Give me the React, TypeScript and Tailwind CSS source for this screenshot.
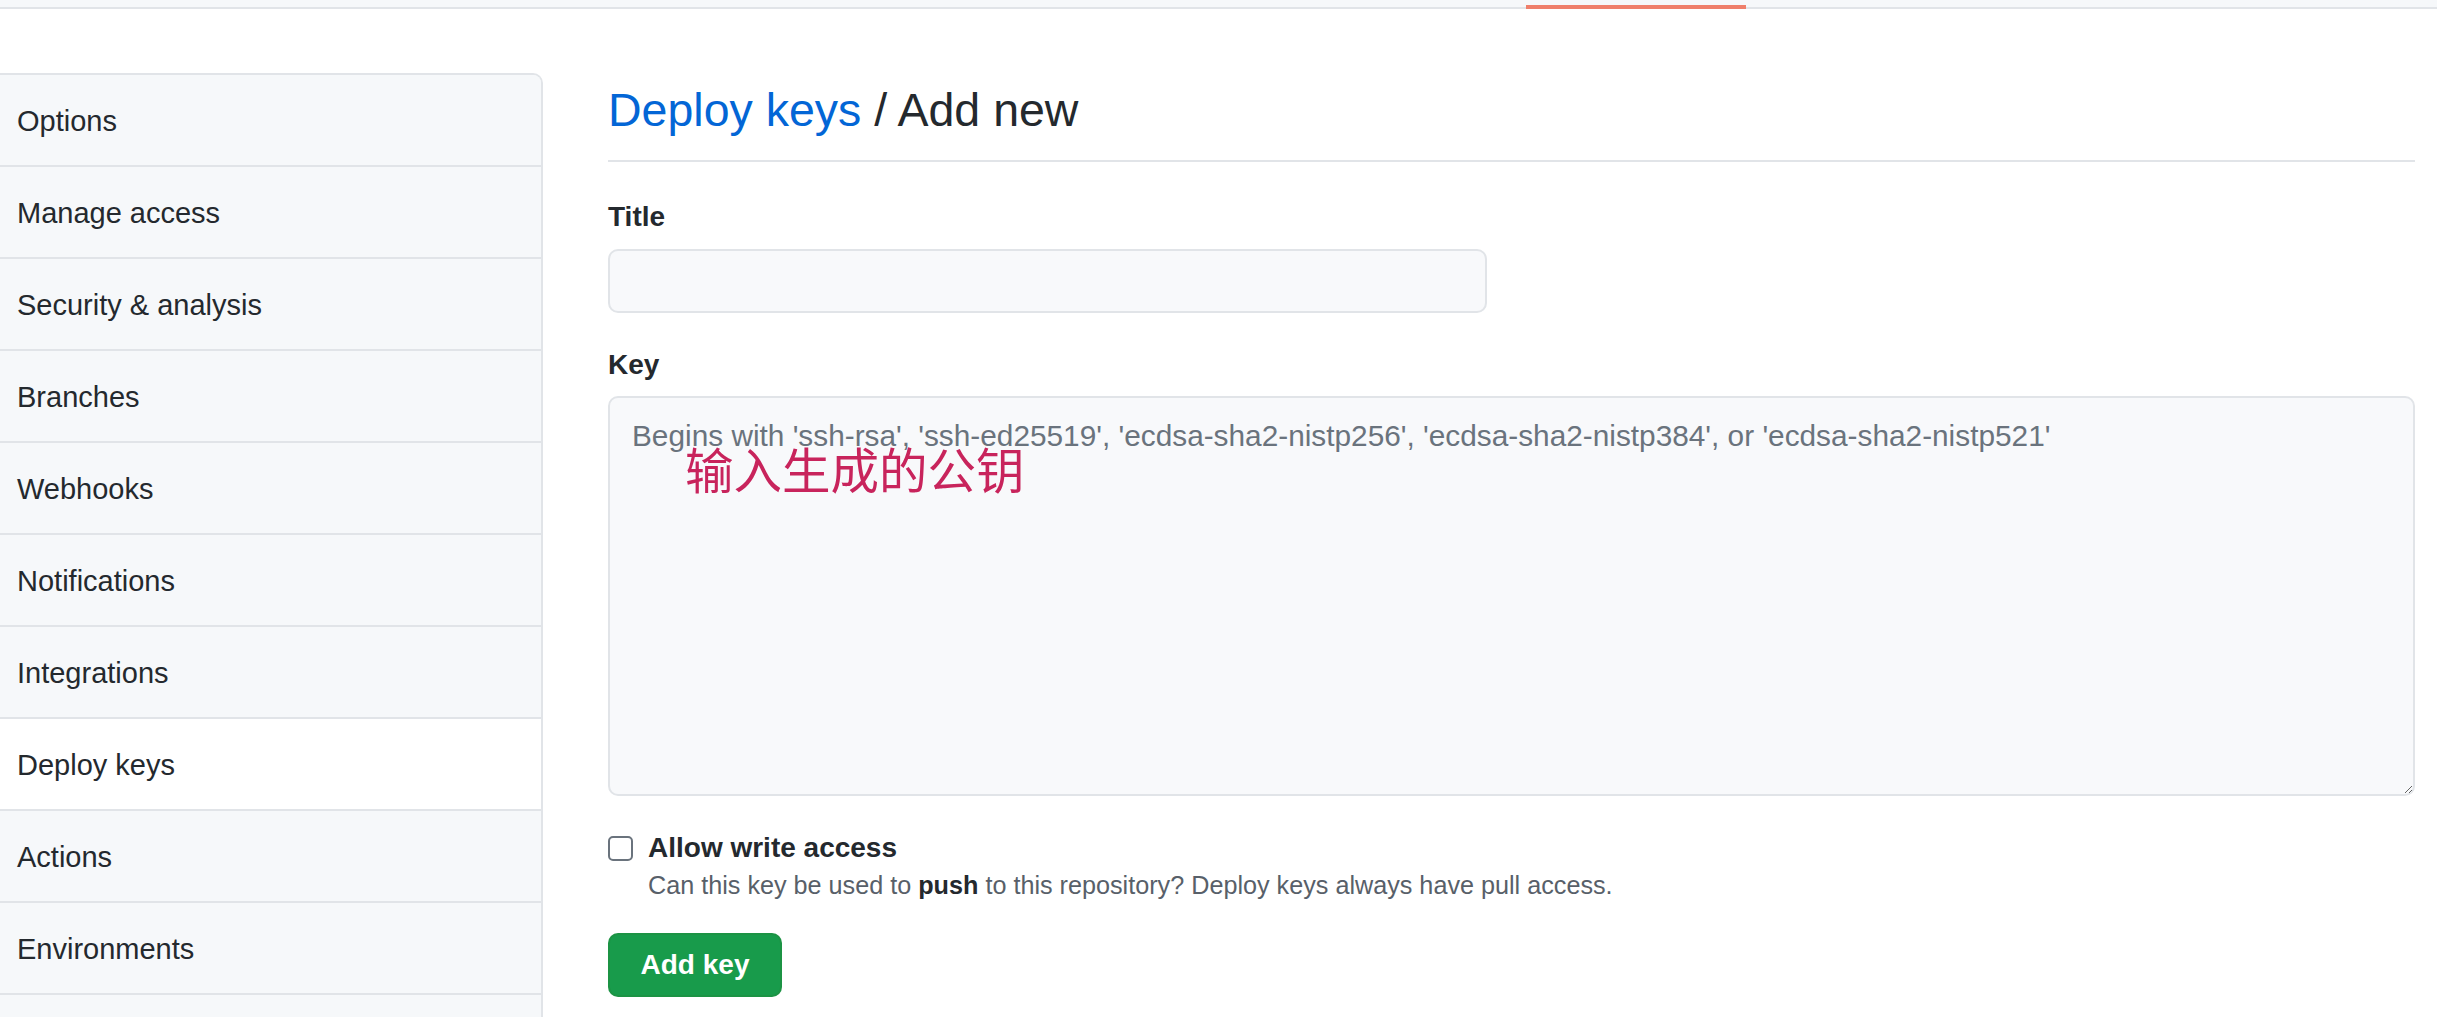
import React from "react";

const menuItems = [
  "Options",
  "Manage access",
  "Security & analysis",
  "Branches",
  "Webhooks",
  "Notifications",
  "Integrations",
  "Deploy keys",
  "Actions",
  "Environments",
];

function SettingsMenu({ active }: { active: string }) {
  return (
    <nav className="mt-[64px] min-h-[1000px] w-[543px] shrink-0 overflow-hidden rounded-tr-[10px] border-t-2 border-r-2 border-[#e1e4e8] bg-[#f6f8fa]">
      {menuItems.map((item) => (
        <div
          key={item}
          className={
            "flex h-[92px] items-center border-b-2 border-[#e1e4e8] pl-[17px] pt-[3px] text-[29px] text-[#24292e] " +
            (item === active ? "bg-white" : "bg-[#f6f8fa]")
          }
        >
          {item}
        </div>
      ))}
    </nav>
  );
}

export default function App() {
  return (
    <div className="h-[1017px] overflow-hidden bg-white font-['Liberation_Sans',Arial,sans-serif] text-[#24292e]">
      {/* top tab strip, only its lower edge is visible */}
      <div className="box-border flex h-[9px] border-b-2 border-[#e1e4e8] bg-[#f6f8fa]">
        <div className="ml-[1526px] mt-[5px] h-[4px] w-[220px] bg-[#ef7f6b]" />
      </div>

      <div className="flex">
        <SettingsMenu active="Deploy keys" />

        <main className="ml-[65px] flex-1 pr-[22px] pt-[73px]">
          <h2 className="border-b-2 border-[#e1e4e8] pb-[22px] text-[46.5px] leading-[56px] font-normal">
            <a className="text-[#0366d6]" href="#">
              Deploy keys
            </a>{" "}
            / Add new
          </h2>

          <form className="flex flex-col" onSubmit={(e) => e.preventDefault()}>
            <label className="mt-[35px] text-[28px] leading-[40px] font-bold">
              Title
            </label>
            <input
              type="text"
              className="mt-[12px] box-border h-[64px] w-[879px] rounded-[10px] border-2 border-[#e1e4e8] bg-[#f8f9fb] px-[22px] text-[28px] outline-none"
            />

            <label className="mt-[32px] text-[28px] leading-[40px] font-bold">
              Key
            </label>
            <div className="relative mt-[11px]">
              <textarea
                className="box-border block h-[400px] w-full rounded-[10px] border-2 border-[#e1e4e8] bg-[#f8f9fb] px-[22px] pt-[18px] text-[29.8px] leading-[40px] outline-none placeholder:text-[#6a737d]"
                placeholder="Begins with 'ssh-rsa', 'ssh-ed25519', 'ecdsa-sha2-nistp256', 'ecdsa-sha2-nistp384', or 'ecdsa-sha2-nistp521'"
              />
              {/* annotation drawn over the screenshot */}
              <span className="pointer-events-none absolute left-[77px] top-[48px] font-['Noto_Sans_CJK_SC',sans-serif] text-[48.5px] leading-[49px] text-[#c8245c]">
                输入生成的公钥
              </span>
            </div>

            <div className="mt-[39px] flex items-start gap-[15px]">
              <input
                type="checkbox"
                className="mt-[1px] box-border h-[25px] w-[25px] appearance-none rounded-[5px] border-2 border-[#6a737d] bg-white"
              />
              <div className="flex flex-col">
                <span className="-mt-[7px] text-[28px] leading-[40px] font-bold">
                  Allow write access
                </span>
                <span className="text-[25.2px] leading-[34px] text-[#586069]">
                  Can this key be used to <b className="text-[#24292e]">push</b> to this
                  repository? Deploy keys always have pull access.
                </span>
              </div>
            </div>

            <button
              type="submit"
              className="mt-[31px] h-[64px] w-[174px] rounded-[10px] border-2 border-[#22863a]/40 bg-[#189b4b] text-[28px] font-bold text-white"
            >
              Add key
            </button>
          </form>
        </main>
      </div>
    </div>
  );
}
